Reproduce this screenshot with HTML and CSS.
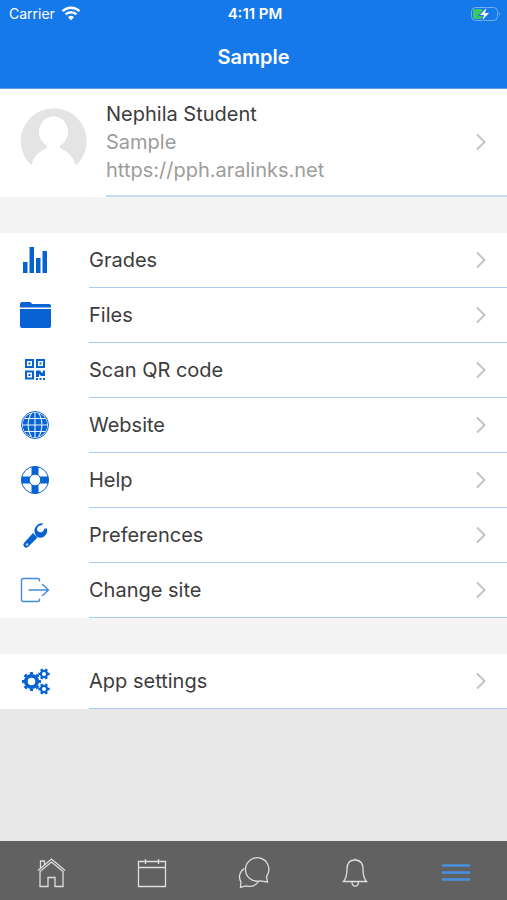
FILE: index.html
```
<!DOCTYPE html>
<html lang="en">
<head>
    <meta charset="UTF-8">
    <meta name="viewport" content="width=device-width, initial-scale=1.0">
    <title>Sample</title>
    <link rel="stylesheet" href="styles.css">
</head>
<body>
    <header class="header">
        <div class="status">
            <div class="carrier">
                <span>Carrier</span>
                <svg width="20" height="16" viewBox="0 0 20 16" fill="none" stroke="#fff" stroke-width="2.4">
                    <path d="M1.5 5.200a12.2 12.2 0 0 1 17 0M4.6 8.400a7.8 7.8 0 0 1 10.8 0"/>
                    <path d="M10 14.300l-3-3.1a4.3 4.3 0 0 1 6 0z" fill="#fff" stroke="none"/>
                </svg>
            </div>
            <span class="time">4:11 PM</span>
            <svg class="battery" width="31" height="16" viewBox="0 0 31 16">
                <rect x="1.5" y="1.5" width="26" height="13" rx="4" fill="none" stroke="#73b0f5"/>
                <path d="M29 6v4a2.5 2.5 0 0 0 0-4z" fill="#73b0f5"/>
                <rect x="3" y="3" width="10" height="10" rx="2" fill="#35cb62"/>
                <path d="M16.5 2L10 9h4l-1.500 5L19 7h-4z" fill="#fff" stroke="#1679ea" stroke-width="2" paint-order="stroke"/>
            </svg>
        </div>
        <h1>Sample</h1>
    </header>

    <main>
        <a class="profile" href="#">
            <svg class="avatar" width="68" height="68" viewBox="0 0 68 68">
                <path d="M11.500 57.500A33 33 0 1 1 56 57.500C53 49 48 43 40 40.500V37.500A14.500 15.500 0 1 0 27 37.500V40.500C19 43 13 49 11.500 57.500z" fill="#e4e4e4"/>
            </svg>
            <div class="profile-text">
                <div>
                    <h2>Nephila Student</h2>
                    <p>Sample</p>
                    <p>https://pph.aralinks.net</p>
                </div>
                <svg class="chevron" width="12" height="18" viewBox="0 0 12 18"><path d="M2 1.500L9.500 9 2 16.500"/></svg>
            </div>
        </a>

        <nav class="list">
            <a class="row" href="#">
                <svg class="icon" width="32" height="32" viewBox="0 0 32 32">
                    <path d="M4 18h4.500v11H4zM10.500 3H15v26h-4.500zM17 14h4.500v15H17zM23.500 7H28v22h-4.500z"/>
                </svg>
                <span class="label">Grades<svg class="chevron" width="12" height="18" viewBox="0 0 12 18"><path d="M2 1.500L9.500 9 2 16.500"/></svg></span>
            </a>
            <a class="row" href="#">
                <svg class="icon" width="32" height="32" viewBox="0 0 32 32">
                    <path d="M1 8.500V5q0-2 2-2h8q1 0 2 2h17q2 0 2 2v1.500zM1 10h31v17q0 2-2 2H3q-2 0-2-2z"/>
                </svg>
                <span class="label">Files<svg class="chevron" width="12" height="18" viewBox="0 0 12 18"><path d="M2 1.500L9.500 9 2 16.500"/></svg></span>
            </a>
            <a class="row" href="#">
                <svg class="icon" width="32" height="32" viewBox="0 0 32 32">
                    <path d="M7 6h7v7H7zM18 6h7v7h-7zM7 17.500h7v7H7z" fill="none" stroke="#0763d3" stroke-width="2"/>
                    <path d="M9.500 8.500h2v2h-2zM20.500 8.500h2v2h-2zM9.500 20h2v2h-2zM17 16.500h4l1.500 2H24v-2h2V22h-4l-2-2v3h-3zM17 24h2v2h-2zM20.500 24h2v2h-2zM24 24h2v2h-2z"/>
                </svg>
                <span class="label">Scan QR code<svg class="chevron" width="12" height="18" viewBox="0 0 12 18"><path d="M2 1.500L9.500 9 2 16.500"/></svg></span>
            </a>
            <a class="row" href="#">
                <svg class="icon" width="32" height="32" viewBox="0 0 32 32">
                    <circle cx="16" cy="16" r="13.500" fill="none" stroke="#0763d3"/>
                    <circle cx="16" cy="16" r="12.300"/>
                    <path d="M16 3v26M3 16h26M5.500 9.500h21M5.500 22.500h21M12.500 4c-4.500 7-4.500 17 0 24M19.500 4c4.500 7 4.500 17 0 24" fill="none" stroke="#e7f1fc" stroke-width="1.100"/>
                </svg>
                <span class="label">Website<svg class="chevron" width="12" height="18" viewBox="0 0 12 18"><path d="M2 1.500L9.500 9 2 16.500"/></svg></span>
            </a>
            <a class="row" href="#">
                <svg class="icon" width="32" height="32" viewBox="0 0 32 32">
                    <path d="M12.500 2.500h7v8.500h-7zM12.500 21h7v8.500h-7zM2.500 12.500H11v7H2.500zM21 12.500h8.500v7H21z"/>
                    <circle cx="16" cy="16" r="13.500" fill="none" stroke="#0763d3"/>
                    <circle cx="16" cy="16" r="5.800" fill="#fff" stroke="#0763d3"/>
                </svg>
                <span class="label">Help<svg class="chevron" width="12" height="18" viewBox="0 0 12 18"><path d="M2 1.500L9.500 9 2 16.500"/></svg></span>
            </a>
            <a class="row" href="#">
                <svg class="icon" width="32" height="32" viewBox="0 0 32 32">
                    <path d="M24.500 4.500A7.500 7.500 0 0 0 15.500 13l1 3 2.500 2.500 3 .3A7.500 7.500 0 0 0 28 9.500h-2.500l-1 2a3.400 3.400 0 1 1-2.500-5z"/>
                    <path d="M14 14L18.500 18.500 9 28q-2 1.500-3.800-.2T5 24z"/>
                    <circle cx="8" cy="25.500" r="1.200" fill="#b9d7f7"/>
                </svg>
                <span class="label">Preferences<svg class="chevron" width="12" height="18" viewBox="0 0 12 18"><path d="M2 1.500L9.500 9 2 16.500"/></svg></span>
            </a>
            <a class="row" href="#">
                <svg class="icon outline" width="32" height="32" viewBox="0 0 32 32">
                    <path d="M20.500 7.500V6.500q0-2-2-2H4.500q-2 0-2 2v19q0 2 2 2h14q2 0 2-2V24.500M9.500 16H29M23 10l6.500 6-6.500 6"/>
                </svg>
                <span class="label">Change site<svg class="chevron" width="12" height="18" viewBox="0 0 12 18"><path d="M2 1.500L9.500 9 2 16.500"/></svg></span>
            </a>
        </nav>

        <nav class="list">
            <a class="row" href="#">
                <svg class="icon" width="32" height="32" viewBox="0 0 32 32">
                    <g fill="none" stroke="#0763d3">
                        <circle cx="12.500" cy="16.500" r="5.700" stroke-width="3.800"/>
                        <circle cx="12.500" cy="16.500" r="8.300" stroke-width="2.400" pathLength="16" stroke-dasharray="1 1" stroke-dashoffset=".5"/>
                        <circle cx="25" cy="9" r="3.100" stroke-width="2.200"/>
                        <circle cx="25" cy="9" r="4.700" stroke-width="2" pathLength="12" stroke-dasharray="1 1" stroke-dashoffset=".5"/>
                        <circle cx="25" cy="24" r="3.100" stroke-width="2.200"/>
                        <circle cx="25" cy="24" r="4.700" stroke-width="2" pathLength="12" stroke-dasharray="1 1" stroke-dashoffset=".5"/>
                    </g>
                </svg>
                <span class="label">App settings<svg class="chevron" width="12" height="18" viewBox="0 0 12 18"><path d="M2 1.500L9.500 9 2 16.500"/></svg></span>
            </a>
        </nav>
    </main>

    <footer class="tabs">
        <button type="button" aria-label="Home">
            <svg width="32" height="32" viewBox="0 0 32 32">
                <path d="M5 15v15.500h8v-9h7v9h8V15M3 14.500L16.500 3 30 14.500M5 15.500L16.500 6 28 15.500M5.500 12V5h4v3.500"/>
            </svg>
        </button>
        <button type="button" aria-label="Calendar">
            <svg width="32" height="32" viewBox="0 0 32 32">
                <path d="M2.500 5.500h27v25h-27zM2.500 11.500h27M9.500 3v5M22.500 3v5"/>
            </svg>
        </button>
        <button type="button" aria-label="Messages">
            <svg width="32" height="32" viewBox="0 0 32 32">
                <path d="M29.500 26l-1-5.500A11.700 11.700 0 1 0 22 24.800zM6.200 12.500C.8 16.500.5 22 3 26l-.5 5.300 5.500-1.500c5.500 1.500 10 0 12.500-4.500"/>
            </svg>
        </button>
        <button type="button" aria-label="Notifications">
            <svg width="32" height="32" viewBox="0 0 32 32">
                <path d="M16 4c-6 0-8 4.500-8 9 0 6-.5 9-3.500 12.500h23C24.500 22 24 19 24 13c0-4.500-2-9-8-9zM13 26c0 5.500 6.500 5.500 6.500 0M16 2.500V4"/>
            </svg>
        </button>
        <button type="button" class="active" aria-label="More">
            <svg width="32" height="32" viewBox="0 0 32 32">
                <path d="M2 9.500h28M2 16.500h28M2 23.500h28"/>
            </svg>
        </button>
    </footer>
</body>
</html>
```
FILE: styles.css
```
* {
    box-sizing: border-box;
}
body {
    margin: 0;
    min-height: 100vh;
    display: flex;
    flex-direction: column;
    background-color: #e8e8e8;
    color: #3c3c3c;
    font-family: Inter, "Liberation Sans", sans-serif;
    font-size: 20px;
    line-height: 28px;
}
h1, h2, p {
    margin: 0;
    font-size: 20px;
    font-weight: 400;
}
a {
    color: inherit;
    text-decoration: none;
}
svg {
    flex: none;
}
.header {
    background-color: #1679ea;
    color: #fff;
    border-bottom: 1px solid #5c9ae6;
    padding-bottom: 17px;
}
.header h1 {
    text-align: center;
    font-weight: 600;
}
.status {
    display: grid;
    grid-template-columns: 1fr auto 1fr;
    align-items: center;
    height: 28px;
    padding: 0 6px 0 9px;
    margin-bottom: 15px;
    font-size: 14px;
}
.carrier {
    display: flex;
    align-items: center;
    gap: 6px;
}
.time {
    font-size: 15px;
    font-weight: 600;
}
.battery {
    justify-self: end;
}
.profile {
    display: flex;
    align-items: stretch;
    background-color: #fff;
    padding-left: 20px;
}
.avatar {
    margin: 19px 18px 0 0;
}
.profile-text {
    flex: 1;
    display: flex;
    align-items: center;
    justify-content: space-between;
    padding: 11px 20px 11px 0;
    border-bottom: 2px solid #c8dbf2;
}
.profile-text p {
    color: #9c9c9c;
}
.list {
    border-top: 36px solid #f4f4f4;
    background-color: #fff;
}
.row {
    display: flex;
    align-items: center;
    height: 55px;
    padding-left: 19px;
}
.icon {
    margin: 0 38px 2px 0;
    fill: #0763d3;
}
.outline {
    fill: none;
    stroke: #428bdf;
    stroke-width: 1.4px;
}
.label {
    flex: 1;
    display: flex;
    align-items: center;
    justify-content: space-between;
    height: 55px;
    padding-right: 20px;
    border-bottom: 1px solid #a9caf2;
}
.chevron path {
    fill: none;
    stroke: #c4c4c4;
    stroke-width: 2px;
}
.tabs {
    display: flex;
    margin-top: auto;
    height: 59px;
    background-color: #616161;
}
.tabs button {
    flex: 1;
    display: flex;
    justify-content: center;
    align-items: center;
    padding: 3px 0 0;
    border: none;
    background: none;
    cursor: pointer;
}
.tabs svg {
    fill: none;
    stroke: #dedede;
    stroke-width: 1.3px;
}
.tabs .active svg {
    stroke: #4a90e2;
    stroke-width: 2.6px;
}
```
